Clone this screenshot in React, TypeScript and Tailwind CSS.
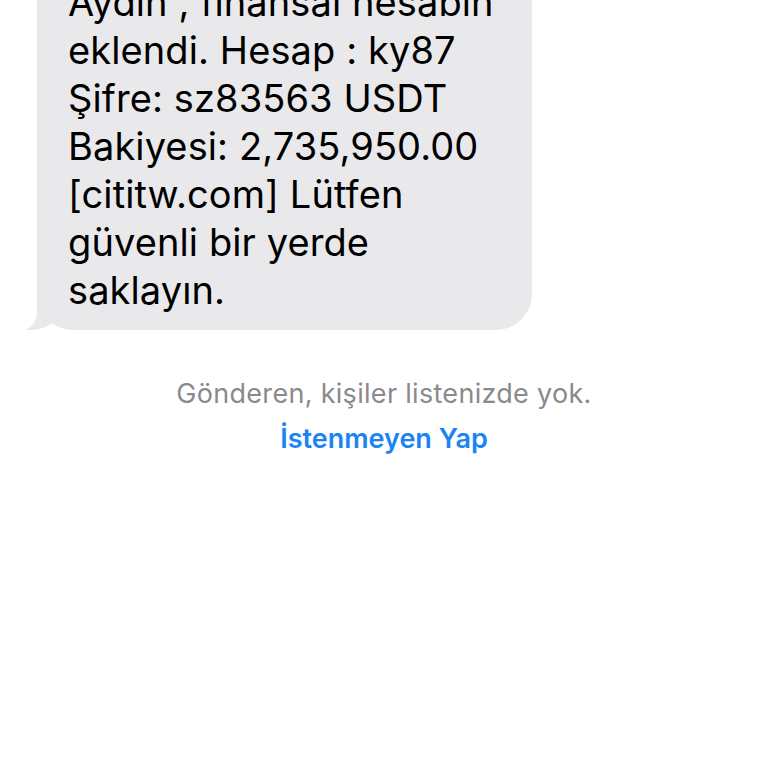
import type { ReactNode } from "react";

const lines = [
  "Aydın , finansal hesabın",
  "eklendi. Hesap : ky87",
  "Şifre: sz83563 USDT",
  "Bakiyesi: 2,735,950.00",
  "[cititw.com] Lütfen",
  "güvenli bir yerde",
  "saklayın.",
];

function Bubble({ children }: { children: ReactNode }) {
  return (
    <div className="relative w-[495px] rounded-[36px] bg-[#e9e9eb] pl-[31px] pr-4 pt-4 pb-4">
      {children}
      {/* tail */}
      <svg
        className="absolute -left-[12px] bottom-0"
        width="44"
        height="40"
        viewBox="0 0 44 40"
      >
        <path
          d="M12 0 L12 22 C12 31 7 37 0 40 C11 41 21 38 29 32 C33 35 38 38 44 40 L44 0 Z"
          fill="#e9e9eb"
        />
      </svg>
    </div>
  );
}

export default function App() {
  return (
    <div className="h-[768px] w-[768px] overflow-hidden bg-white font-['Inter',sans-serif]">
      <div className="-mt-[38px] pl-[37px]">
        <Bubble>
          <div className="text-[38px] leading-[48px] tracking-[0.1px] text-black">
            {lines.map((l) => (
              <div key={l} className="whitespace-nowrap">
                {l}
              </div>
            ))}
          </div>
        </Bubble>
      </div>

      <div className="mt-[48px] flex flex-col items-center">
        <p className="text-[27px] leading-[32px] tracking-[0.3px] text-[#8a8a8e]">
          Gönderen, kişiler listenizde yok.
        </p>
        <p className="mt-[13px] text-[27px] font-semibold leading-[32px] text-[#1a84f2]">
          İstenmeyen Yap
        </p>
      </div>
    </div>
  );
}
